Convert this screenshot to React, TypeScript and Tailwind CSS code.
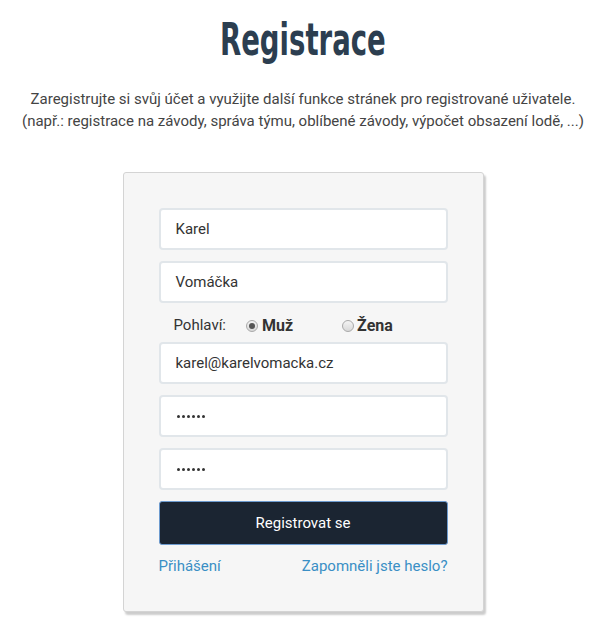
import React from "react";

const roboto = { fontFamily: "Roboto, 'Liberation Sans', sans-serif" };

function Radio({ checked }: { checked: boolean }) {
  return (
    <span className="inline-flex h-[12px] w-[12px] items-center justify-center rounded-full border border-[#a9a9a9] bg-gradient-to-b from-[#f4f4f4] to-[#d8d8d8]">
      {checked && <span className="h-[6px] w-[6px] rounded-full bg-[#555]" />}
    </span>
  );
}

function Field({ value, password }: { value: string; password?: boolean }) {
  return (
    <div className="flex h-[42px] w-full items-center rounded-[4px] border-2 border-[#e1e6ea] bg-white pl-[15px] text-[15px] text-[#333]">
      {password ? (
        <span className="flex gap-[2px] pl-[1px]">
          {Array.from({ length: 6 }).map((_, i) => (
            <span key={i} className="h-[3px] w-[3px] rounded-full bg-[#333]" />
          ))}
        </span>
      ) : (
        value
      )}
    </div>
  );
}

export default function App() {
  return (
    <div className="min-h-[632px] w-[606px] bg-white" style={roboto}>
      <div className="flex flex-col items-center">
        <h1
          className="mt-[12px] h-[56px] text-[45px] font-semibold leading-[56px] text-[#2c3e50]"
          style={{ fontFamily: "'DejaVu Sans Condensed', sans-serif", transform: "scaleX(0.68)" }}
        >
          Registrace
        </h1>
        <p className="mt-[20px] text-center text-[15px] leading-[22px] text-[#444]">
          Zaregistrujte si svůj účet a využijte další funkce stránek pro registrované uživatele.
          <br />
          (např.: registrace na závody, správa týmu, oblíbené závody, výpočet obsazení lodě, ...)
        </p>
        <div className="mt-[40px] flex w-[361px] flex-col rounded-[3px] border border-[#d4d4d4] bg-[#f6f6f6] px-[35px] pb-[35px] pt-[35px] shadow-[2px_3px_2px_rgba(0,0,0,0.2)]">
          <div className="flex flex-col gap-[11px]">
            <Field value="Karel" />
            <Field value="Vomáčka" />
          </div>
          <div className="flex h-[39px] items-center pt-[6px] text-[15px] text-[#333]">
            <span className="ml-[15px]">Pohlaví:</span>
            <span className="ml-[20px] flex items-center gap-[4px]">
              <Radio checked />
              <b className="text-[16px] font-bold">Muž</b>
            </span>
            <span className="ml-[49px] flex items-center gap-[3px]">
              <Radio checked={false} />
              <b className="text-[16px] font-bold">Žena</b>
            </span>
          </div>
          <div className="flex flex-col gap-[11px]">
            <Field value="karel@karelvomacka.cz" />
            <Field value="" password />
            <Field value="" password />
          </div>
          <button className="mt-[11px] h-[44px] w-full rounded-[3px] border border-[#6d9bcf] bg-[#1b2532] text-[15px] text-white">
            Registrovat se
          </button>
          <div className="mt-[11px] flex justify-between text-[15px] leading-[20px] text-[#3a8fc5]">
            <span>Přihášení</span>
            <span>Zapomněli jste heslo?</span>
          </div>
        </div>
      </div>
    </div>
  );
}
